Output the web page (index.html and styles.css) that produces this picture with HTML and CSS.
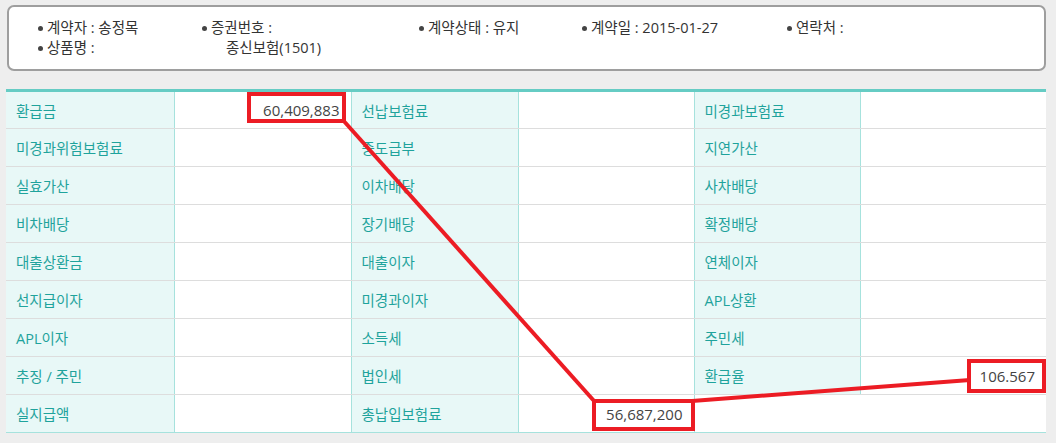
FILE: index.html
```html
<!DOCTYPE html>
<html lang="ko">
<head>
<meta charset="utf-8">
<link rel="stylesheet" href="styles.css">
</head>
<body>
<div class="page">
  <div class="info">
    <ul class="info-grid">
      <li class="c1">계약자 : 송정목</li>
      <li class="c2">증권번호 :</li>
      <li class="c3">계약상태 : 유지</li>
      <li class="c4">계약일 : 2015-01-27</li>
      <li class="c5">연락처 :</li>
      <li class="c1">상품명 :</li>
      <li class="c2 nob"><span class="val">종신보험(1501)</span></li>
    </ul>
  </div>

  <table class="grid">
    <colgroup>
      <col style="width:168px"><col style="width:177px"><col style="width:167px"><col style="width:176px"><col style="width:166px"><col style="width:186px">
    </colgroup>
    <tbody>
      <tr><th>환급금</th><td>60,409,883</td><th>선납보험료</th><td></td><th>미경과보험료</th><td></td></tr>
      <tr><th>미경과위험보험료</th><td></td><th>중도급부</th><td></td><th>지연가산</th><td></td></tr>
      <tr><th>실효가산</th><td></td><th>이차배당</th><td></td><th>사차배당</th><td></td></tr>
      <tr><th>비차배당</th><td></td><th>장기배당</th><td></td><th>확정배당</th><td></td></tr>
      <tr><th>대출상환금</th><td></td><th>대출이자</th><td></td><th>연체이자</th><td></td></tr>
      <tr><th>선지급이자</th><td></td><th>미경과이자</th><td></td><th>APL상환</th><td></td></tr>
      <tr><th>APL이자</th><td></td><th>소득세</th><td></td><th>주민세</th><td></td></tr>
      <tr><th>추징 / 주민</th><td></td><th>법인세</th><td></td><th>환급율</th><td>106.567</td></tr>
      <tr><th>실지급액</th><td></td><th>총납입보험료</th><td>56,687,200</td><th></th><td></td></tr>
    </tbody>
  </table>
</div>

<svg class="marks" width="1056" height="443" viewBox="0 0 1056 443">
  <g fill="none" stroke="#ec1c24" stroke-width="4">
    <rect x="249" y="94" width="95" height="27"/>
    <rect x="594" y="401" width="99" height="28"/>
    <rect x="969" y="361" width="75" height="30"/>
    <line x1="342" y1="119" x2="595" y2="402"/>
    <line x1="692" y1="401" x2="970" y2="380"/>
  </g>
</svg>
</body>
</html>
```

FILE: styles.css
```css
html, body {
  margin: 0;
  padding: 0;
  background: #eeeeee;
}
body {
  font-family: "Open Sans", "Noto Sans CJK KR", sans-serif;
  font-size: 14.5px;
  color: #333;
  width: 1056px;
  height: 443px;
  overflow: hidden;
  position: relative;
}
.page {
  padding: 5px 0 0 6px;
  width: 1040px;
}
.info {
  margin-left: 1px;
  width: 1035px;
  background: #fff;
  border: 2px solid #9e9e9e;
  border-radius: 7px;
  padding: 11px 0 11px 0;
}
.info-grid {
  list-style: none;
  margin: 0;
  padding: 0 0 0 28px;
  display: grid;
  grid-template-columns: 164px 217px 163px 205px 1fr;
  line-height: 20px;
}
.info-grid li {
  position: relative;
  padding-left: 10px;
  white-space: nowrap;
}
.info-grid li::before {
  content: "";
  position: absolute;
  left: 1px;
  top: 8px;
  width: 5px;
  height: 5px;
  border-radius: 50%;
  background: #444;
}
.info-grid li.nob::before { display: none; }
.info-grid .val { padding-left: 15px; }
.c1 { grid-column: 1; }
.c2 { grid-column: 2; }
.c3 { grid-column: 3; }
.c4 { grid-column: 4; }
.c5 { grid-column: 5; }

.grid {
  margin-top: 18px;
  width: 1040px;
  table-layout: fixed;
  border-collapse: collapse;
  border-top: 3px solid #66ccc4;
  background: #fff;
}
.grid tr { height: 38px; }
.grid th, .grid td {
  height: 38px;
  box-sizing: border-box;
  padding: 0 10px;
  border-bottom: 1px solid #dddddd;
  font-weight: normal;
  white-space: nowrap;
}
.grid th {
  background: #e8f8f7;
  color: #1fa39c;
  text-align: left;
  border-left: 1px solid #a6e2dd;
  border-right: 1px solid #a6e2dd;
}
.grid th:first-child { border-left: none; }
.grid td {
  text-align: right;
  color: #444;
  padding-right: 11px;
  font-size: 15px;
}
.grid tr:last-child th, .grid tr:last-child td {
  border-bottom: 1px solid #a6e2dd;
}
.grid tr:last-child th:nth-child(5) {
  background: #fff;
  border-left: 1px solid #a6e2dd;
  border-right: none;
}
.marks {
  position: absolute;
  left: 0;
  top: 0;
  pointer-events: none;
}
```
